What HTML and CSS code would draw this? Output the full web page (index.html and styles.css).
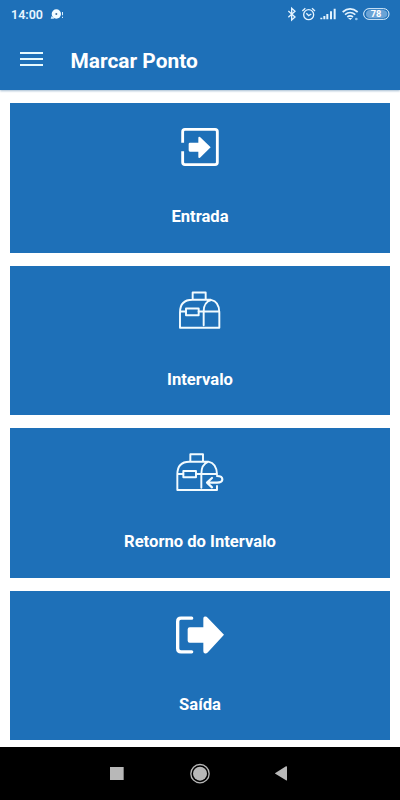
FILE: index.html
```html
<!DOCTYPE html>
<html lang="pt-BR">
<head>
<meta charset="utf-8">
<meta name="viewport" content="width=device-width, initial-scale=1">
<title>Marcar Ponto</title>
<link rel="stylesheet" href="styles.css">
</head>
<body>
<div class="app">
  <header class="header">
    <div class="status">
      <span class="clock">14:00</span>
      <svg class="notice" viewBox="0 0 45 48"><circle cx="19" cy="24" r="14" fill="#f4fcff"/><path d="M2 38l3-8 8 8zM36 18h3v10h-3zM36 32h3v4h-3z" fill="#d9efff"/><circle cx="19" cy="24" r="3" fill="#3d6f9e"/></svg>
      <svg class="indicators" viewBox="0 0 360 90" fill="none" stroke="#e3f3ff" stroke-width="4">
        <path d="M25 33l20 18-10 9V25l10 9-20 18"/>
        <circle cx="86" cy="44" r="15"/><path d="M79 40l7 7 8-5M67 33l9-8M105 33l-9-8"/>
        <path d="M124 53v5M133 48v10M142 42v16M153 34v24M164 26v32" stroke-width="6"/>
        <path d="M188 36q22-19 45 0M195 44q15-13 31 0M202 51q8-7 17 0" stroke-width="5"/>
        <path d="M204 54h13l-6 6z" fill="#e3f3ff" stroke="none"/><circle cx="229" cy="57" r="4" fill="#91c5ef" stroke="none"/>
        <rect x="251" y="26" width="76" height="32" rx="16" stroke-width="3"/>
        <path d="M268 30h42q12 2 12 12t-12 12h-42q-10-2-10-12t10-12" fill="#6aa3d6" stroke="none"/>
        <text class="battery" x="288" y="52" text-anchor="middle">78</text>
      </svg>
    </div>
    <div class="toolbar">
      <div class="menu"><span></span><span></span><span></span></div>
      <h1 class="title">Marcar Ponto</h1>
    </div>
  </header>
  <main class="list">
    <section class="card">
      <svg class="icon" viewBox="0 0 240 180">
        <path d="M68 83V50q0-7 7-7h90q7 0 7 7v92q0 7-7 7H75q-7 0-7-7v-33" fill="none" stroke="#fff" stroke-width="8.5"/>
        <path d="M90 83h25V69q0-5 5-3l32 31-32 31q-5 3-5-3v-15H90q-4 0-4-4V87q0-4 4-4z" fill="#fff"/>
      </svg>
      <div class="label">Entrada</div>
    </section>
    <section class="card">
      <svg class="icon line" viewBox="0 -7.5 240 180">
        <path d="M98 58V36h39v22M115 58h38q25 5 25 38v46H60V96q0-38 37-38h20M78 93H60M116 93h62M131 134V93q0-28 22-34"/>
        <rect x="78" y="84" width="38" height="20"/>
      </svg>
      <div class="label">Intervalo</div>
    </section>
    <section class="card">
      <svg class="icon line" viewBox="0 0 240 180">
        <path d="M91 65V43h38v22M91 65h54q25 5 26 38M171 138v12H52v-47q0-38 36-38h30M70 102H52M108 102h63M124 143v-41q0-29 21-37"/>
        <rect x="70" y="93" width="38" height="19"/>
        <path d="M171 108q16 0 16 10t-16 10h-30M156 114l-15 14 15 14" stroke-width="6.5"/>
      </svg>
      <div class="label">Retorno do Intervalo</div>
    </section>
    <section class="card">
      <svg class="icon" viewBox="0 -7.5 240 180">
        <path d="M95 38H63q-10 0-10 10v81q0 10 10 10h32" fill="none" stroke="#fff" stroke-width="10" stroke-linecap="round"/>
        <path d="M89 65h41V39q0-7 6-6 4 0 7 4l49 51-49 53q-4 4-8 3-5-1-5-7v-25H89q-6 0-6-6V71q0-6 6-6z" fill="#fff"/>
      </svg>
      <div class="label">Saída</div>
    </section>
  </main>
  <nav class="nav">
    <svg class="keys" viewBox="0 0 660 159" fill="#b8b8b8">
      <path d="M60 60h41v39H60z"/>
      <circle cx="330" cy="80" r="21"/><circle cx="330" cy="80" r="27.5" fill="none" stroke="#b8b8b8" stroke-width="4"/>
      <path d="M556 78l32-20q3-1 3 2v38q0 4-3 2l-32-20q-2-1 0-2z"/>
    </svg>
  </nav>
</div>
</body>
</html>
```
FILE: styles.css
```css
* {
  box-sizing: border-box;
}

body {
  margin: 0;
  background: #fff;
  font-family: Roboto, "Liberation Sans", sans-serif;
  color: #fff;
}

.app {
  display: flex;
  flex-direction: column;
  height: 800px;
  overflow: hidden;
}

.header {
  flex: none;
  height: 90px;
  background: #1e70b8;
  box-shadow: 0 1px 2px rgba(30, 90, 140, 0.4);
}

.status {
  display: flex;
  height: 30px;
  padding-left: 11px;
}

.clock {
  width: 39px;
  font-size: 12.5px;
  font-weight: 600;
  line-height: 29px;
  color: #e8f6ff;
}

.notice {
  width: 15px;
  height: 16px;
  margin-top: 6px;
}

.indicators {
  width: 120px;
  height: 30px;
  margin-left: auto;
}

.battery {
  font-size: 28px;
  font-weight: 700;
  fill: #fff;
  stroke: none;
}

.toolbar {
  display: flex;
  align-items: center;
  height: 60px;
  padding-left: 20px;
}

.menu {
  display: flex;
  flex-direction: column;
  gap: 4px;
  width: 23px;
  margin-right: 27.5px;
  margin-bottom: 3px;
}

.menu span {
  height: 2px;
  background: #e6faff;
}

.title {
  margin: 2px 0 0;
  font-size: 20.9px;
  font-weight: 700;
  line-height: 30px;
  white-space: nowrap;
}

.list {
  display: flex;
  flex: 1;
  flex-direction: column;
  gap: 13px;
  padding: 13px 10px 7px;
}

.card {
  display: flex;
  flex: 1;
  flex-direction: column;
  align-items: center;
  padding-top: 12px;
  background: #1e70b8;
}

.icon {
  flex: none;
  width: 80px;
  height: 60px;
}

.line {
  fill: none;
  stroke: #f2fbff;
  stroke-width: 5.8;
  stroke-linejoin: round;
  stroke-linecap: round;
}

.label {
  margin-top: 32px;
  font-size: 16.6px;
  font-weight: 700;
  line-height: 20px;
}

.nav {
  display: flex;
  flex: none;
  justify-content: center;
  height: 53px;
  background: #000;
}

.keys {
  width: 220px;
  height: 53px;
}
```
